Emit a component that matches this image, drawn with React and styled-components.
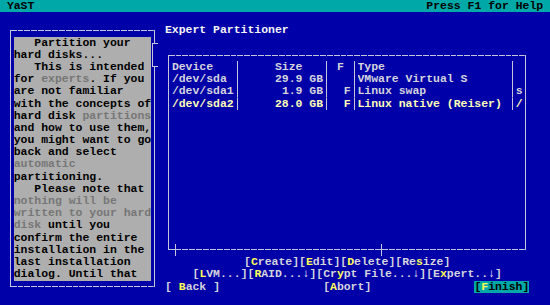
import React from 'react';
import styled, { createGlobalStyle, css } from 'styled-components';

// text-mode screen: 80 x 25 character cells
const C = 6.875;
const R = 12.2;

const BLUE = '#0000a8';
const TEAL = '#00a8a8';
const LINE = '#c4c4dc';
const TEXT = '#d4d4dc';
const HOT = '#ffff55';

const GlobalStyle = createGlobalStyle`
  html, body {
    margin: 0;
    padding: 0;
    background: ${BLUE};
  }
  body {
    font-family: 'Liberation Mono', 'DejaVu Sans Mono', monospace;
    font-size: 11.46px;
    font-weight: 700;
    line-height: ${R}px;
  }
`;

const Screen = styled.div`
  width: 550px;
  height: 305px;
  background: ${BLUE};
  color: ${TEXT};
  overflow: hidden;
  display: flex;
  flex-direction: column;
  white-space: pre;
`;

const TitleBar = styled.div`
  height: ${R}px;
  background: ${TEAL};
  color: #000;
  display: flex;
  justify-content: space-between;
  padding: 0 ${C}px;
`;

const Desk = styled.div`
  display: flex;
  gap: ${C}px;
  padding: ${R}px 0 0 ${C}px;
`;

const frame = css`
  position: relative;
  box-sizing: border-box;
  padding: ${R}px ${C}px;

  &::before {
    content: '';
    position: absolute;
    inset: ${R / 2}px ${C / 2}px;
    border-left: 1px solid ${LINE};
    border-right: 1px solid ${LINE};
    background:
      repeating-linear-gradient(90deg, ${LINE} 0 ${C - 1}px, transparent ${C - 1}px ${C}px) top / 100% 1px no-repeat,
      repeating-linear-gradient(90deg, ${LINE} 0 ${C - 1}px, transparent ${C - 1}px ${C}px) bottom / 100% 1px no-repeat;
    pointer-events: none;
  }
`;

const HelpFrame = styled.div`
  ${frame};
  width: ${22 * C}px;
  height: ${22 * R}px;
`;

const HelpText = styled.div`
  height: 100%;
  background: #aeaeae;
  color: #000;
  overflow: hidden;
`;

const Line = styled.div`
  height: ${R}px;
`;

const Dim = styled.span`
  color: #767676;
`;

const VThumb = styled.div`
  position: absolute;
  top: ${1.5 * R}px;
  left: ${21 * C + 1}px;
  width: ${C - 1}px;
  height: ${2 * R}px;
  box-sizing: border-box;
  border: 1px solid ${LINE};
  border-right: none;
  background: ${BLUE};
`;

const Pane = styled.div`
  width: ${53 * C}px;
  height: ${22 * R}px;
  display: flex;
  flex-direction: column;
`;

const Heading = styled.div`
  height: ${R}px;
  margin-bottom: ${R}px;
  color: #f4f4f4;
`;

const TableFrame = styled.div`
  ${frame};
  height: ${17 * R}px;
`;

const TableGrid = styled.div`
  display: grid;
  grid-template-columns: ${9 * C}px ${C}px ${12 * C}px ${C}px ${3 * C}px ${C}px ${22 * C}px ${C}px ${C}px;
  grid-auto-rows: ${R}px;
`;

const Cell = styled.div`
  overflow: hidden;
  text-align: ${p => p.$align || 'left'};
  padding-left: ${p => (p.$indent || 0) * C}px;
  color: ${p => (p.$sel ? '#ffffb8' : TEXT)};
`;

const Sep = styled.div`
  background: linear-gradient(${LINE}, ${LINE}) center / 1px 100% no-repeat;
`;

const HThumb = styled.div`
  position: absolute;
  bottom: 0;
  left: ${1.5 * C}px;
  width: ${30 * C}px;
  height: ${R}px;
  box-sizing: border-box;
  border-left: 1px solid ${LINE};
  border-right: 1px solid ${LINE};
`;

const ButtonRow = styled.div`
  height: ${R}px;
  display: flex;
  justify-content: ${p => p.$justify || 'center'};
`;

const Btn = styled.span`
  background: ${p => (p.$primary ? TEAL : 'transparent')};
  color: ${p => (p.$primary ? '#000' : TEXT)};
`;

const Key = styled.span`
  color: ${HOT};
`;

const Arrow = styled.span`
  color: #ffffff;
`;

const rows = [
  { dev: '/dev/sda', size: '29.9 GB', f: '', type: 'VMware Virtual S', mount: '' },
  { dev: '/dev/sda1', size: '1.9 GB', f: 'F', type: 'Linux swap', mount: 's' },
  { dev: '/dev/sda2', size: '28.0 GB', f: 'F', type: 'Linux native (Reiser)', mount: '/', sel: true },
];

const Button = ({ pre = '', hot, post = '', arrow, primary }) => (
  <Btn $primary={primary}>
    [{pre}<Key>{hot}</Key>{post}{arrow && <Arrow>↓</Arrow>}]
  </Btn>
);

export default function App() {
  return (
    <>
      <GlobalStyle />
      <Screen>
        <TitleBar>
          <span>YaST</span>
          <span>Press F1 for Help</span>
        </TitleBar>
        <Desk>
          <HelpFrame>
            <HelpText>
              <Line>   Partition your</Line>
              <Line>hard disks...</Line>
              <Line>   This is intended</Line>
              <Line>for <Dim>experts</Dim>. If you</Line>
              <Line>are not familiar</Line>
              <Line>with the concepts of</Line>
              <Line>hard disk <Dim>partitions</Dim></Line>
              <Line>and how to use them,</Line>
              <Line>you might want to go</Line>
              <Line>back and select</Line>
              <Line><Dim>automatic</Dim></Line>
              <Line>partitioning.</Line>
              <Line>   Please note that</Line>
              <Line><Dim>nothing will be</Dim></Line>
              <Line><Dim>written to your hard</Dim></Line>
              <Line><Dim>disk</Dim> until you</Line>
              <Line>confirm the entire</Line>
              <Line>installation in the</Line>
              <Line>last installation</Line>
              <Line>dialog. Until that</Line>
            </HelpText>
            <VThumb />
          </HelpFrame>

          <Pane>
            <Heading>Expert Partitioner</Heading>
            <TableFrame>
              <TableGrid>
                <Cell>Device</Cell>
                <Sep />
                <Cell $indent={5}>Size</Cell>
                <Sep />
                <Cell $indent={1}>F</Cell>
                <Sep />
                <Cell>Type</Cell>
                <Sep />
                <Cell />
                {rows.map(r => (
                  <React.Fragment key={r.dev}>
                    <Cell $sel={r.sel}>{r.dev}</Cell>
                    <Sep />
                    <Cell $sel={r.sel} $align="right">{r.size}</Cell>
                    <Sep />
                    <Cell $sel={r.sel} $align="right">{r.f}</Cell>
                    <Sep />
                    <Cell $sel={r.sel}>{r.type}</Cell>
                    <Sep />
                    <Cell $sel={r.sel}>{r.mount}</Cell>
                  </React.Fragment>
                ))}
              </TableGrid>
              <HThumb />
            </TableFrame>

            <ButtonRow>
              <Button hot="C" post="reate" />
              <Button hot="E" post="dit" />
              <Button hot="D" post="elete" />
              <Button pre="Re" hot="s" post="ize" />
            </ButtonRow>
            <ButtonRow>
              <Button hot="L" post="VM..." />
              <Button hot="R" post="AID..." arrow />
              <Button pre="Cr" hot="y" post="pt File..." arrow />
              <Button pre="E" hot="x" post="pert.." arrow />
            </ButtonRow>
            <ButtonRow $justify="space-between">
              <Button pre=" " hot="B" post="ack " />
              <Button hot="A" post="bort" />
              <Button hot="F" post="inish" primary />
            </ButtonRow>
          </Pane>
        </Desk>
      </Screen>
    </>
  );
}
